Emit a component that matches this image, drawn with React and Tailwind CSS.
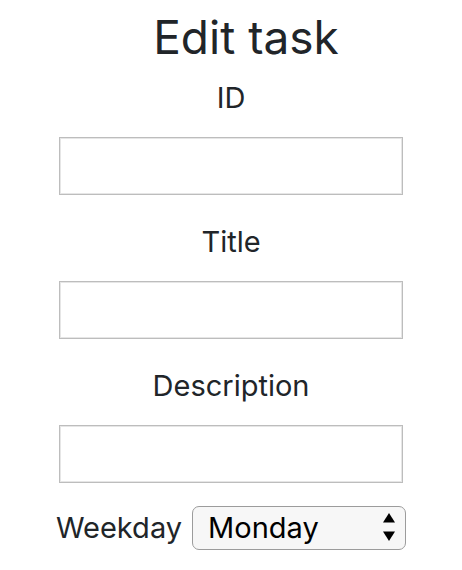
import { useState } from 'react'

const fields = [
  { id: 'id', label: 'ID' },
  { id: 'title', label: 'Title' },
  { id: 'description', label: 'Description' },
]

const days = ['Monday', 'Tuesday', 'Wednesday', 'Thursday', 'Friday', 'Saturday', 'Sunday']

const Field = ({ id, label, first }) => (
  <div className={`flex flex-col items-center ${first ? 'mt-[16px]' : 'mt-[29px]'}`}>
    <label htmlFor={id} className="text-[29px] leading-[36px]">
      {label}
    </label>
    <input
      id={id}
      type="text"
      className="mt-[21px] h-[58px] w-[344px] border border-[#bdbdbd] bg-white px-2 text-[29px] shadow-[inset_0_0_0_1px_#e6e6e6] outline-none"
    />
  </div>
)

const EditTask = () => {
  const [weekday, setWeekday] = useState('Monday')

  return (
    <div className="flex min-h-screen flex-col items-center bg-white font-['Inter',sans-serif] text-[#212529]">
      <h1 className="ml-[30px] mt-[10px] text-[46px] font-normal leading-[54px]">Edit task</h1>

      {fields.map((f, i) => (
        <Field key={f.id} {...f} first={i === 0} />
      ))}

      <div className="mt-[23px] flex items-center gap-[10px]">
        <label htmlFor="weekday" className="text-[29px] leading-[36px]">
          Weekday
        </label>
        <div className="relative">
          <select
            id="weekday"
            value={weekday}
            onChange={(e) => setWeekday(e.target.value)}
            className="h-[44px] w-[214px] appearance-none rounded-[7px] border border-[#9c9c9c] bg-[#f7f7f7] pl-[15px] text-[29px] leading-[36px] text-black outline-none"
          >
            {days.map((d) => (
              <option key={d} value={d}>
                {d}
              </option>
            ))}
          </select>
          <svg
            className="pointer-events-none absolute right-[11px] top-[7px]"
            width="12"
            height="28"
            viewBox="0 0 12 28"
          >
            <polygon points="6,0 12,9.5 0,9.5" fill="#000" />
            <polygon points="0,18.5 12,18.5 6,28" fill="#000" />
          </svg>
        </div>
      </div>
    </div>
  )
}

export default EditTask
